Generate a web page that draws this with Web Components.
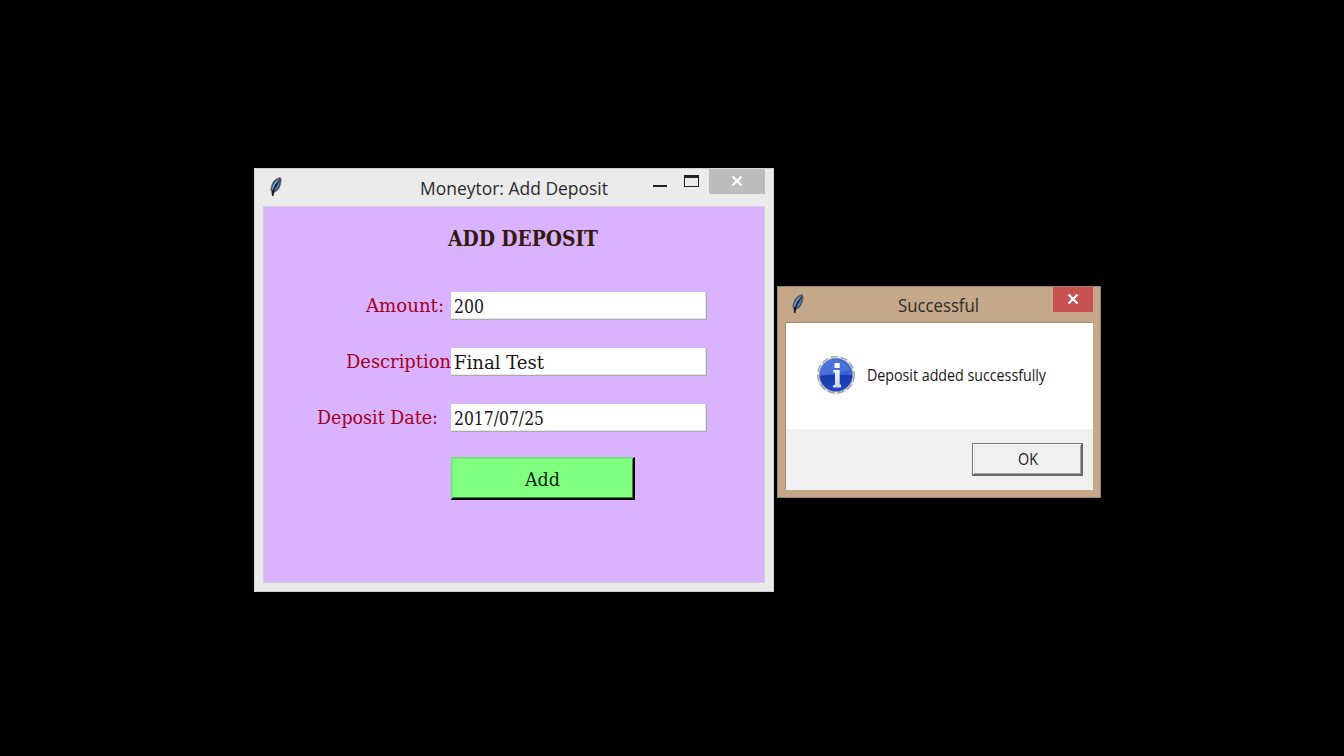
<!DOCTYPE html>
<html lang="en">
<head>
<meta charset="utf-8">
<title>Moneytor</title>
<style>
html,body{margin:0;height:100%;background:#000;overflow:hidden}
body{position:relative;font-family:"Open Sans","Noto Sans",sans-serif}
</style>
</head>
<body>
<desk-window style="left:254px;top:168px;width:520px;height:424px" caption="Moneytor: Add Deposit" caption-width="188" controls="all">
  <deposit-form></deposit-form>
</desk-window>
<desk-window class="dialog" style="left:777px;top:286px;width:324px;height:212px" caption="Successful" caption-width="81" controls="close">
  <message-box></message-box>
</desk-window>
<script>
const define = (name, html, setup) => customElements.define(name, class extends HTMLElement {
  connectedCallback() {
    if (this.shadowRoot) return;
    const t = document.createElement('template');
    t.innerHTML = html;
    this.attachShadow({mode: 'open'}).append(t.content.cloneNode(true));
    if (setup) setup.call(this, this.shadowRoot);
  }
});

/* Text condensed or widened to the width given in the "width" attribute. */
define('fit-label', `<style>
:host{display:block;flex:none;white-space:nowrap}
span{display:inline-block;transform-origin:0 50%}
</style><span><slot></slot></span>`, function (root) {
  const span = root.querySelector('span'), w = +this.getAttribute('width');
  this.style.width = w + 'px';
  span.style.transform = 'scaleX(' + w / span.getBoundingClientRect().width + ')';
});

define('feather-icon', `<style>:host{display:block;width:14px;height:20px}svg{display:block}</style>
<svg width="14" height="20" viewBox="0 0 14 20">
<path d="M11.600.8C8.500.6 5 3 3.200 7C1.700 10.500 1.500 13 2.600 14.700L3.600 19L5 15.600C7.500 14.500 9.800 12.500 10.800 9.500C11.800 6.500 12.800 3 11.600.8Z" fill="#333b45" stroke="#6f747a" stroke-width=".8"/>
<path d="M10.500 1.800C7.600 2.600 5 5.500 3.700 9C2.900 11.200 2.800 12.700 3.500 13.500C4.800 10 7.500 6 10.500 1.800Z" fill="#75a6e2"/>
<path d="M11 3.500C9 7 6.600 10.800 5 14C7.600 13 9.200 11 9.900 8.500Z" fill="#5089d2"/>
<path d="M8 5.800Q5 10 4 15M6.600 7L7.600 9.500" fill="none" stroke="#111820" stroke-width=".9"/>
<path d="M4.200 13.500L3.700 18.800" stroke="#111" stroke-width="1.500"/>
</svg>`);

define('info-icon', `<style>:host{display:block;width:40px;height:40px}svg{display:block}</style>
<svg width="40" height="40" viewBox="0 0 40 40">
<defs><linearGradient id="b" x2="0" y2="1"><stop offset="0" stop-color="#3c66d6"/><stop offset=".48" stop-color="#3763cf"/><stop offset=".52" stop-color="#173bab"/><stop offset="1" stop-color="#2348c4"/></linearGradient>
<linearGradient id="w" x2="0" y2="1"><stop offset="0" stop-color="#fff"/><stop offset="1" stop-color="#cfd3e4"/></linearGradient></defs>
<circle cx="20" cy="20.500" r="18.900" fill="#dedede"/>
<circle cx="20" cy="19.800" r="18.200" fill="#f0f0f0" stroke="#999" stroke-width="1.200" stroke-dasharray="7 3"/>
<circle cx="20" cy="20" r="16.700" fill="url(#b)" stroke="#8792ae" stroke-width=".6"/>
<path d="M3.800 22C10 18 25 18 34 15A16.400 16.400 0 0 0 5 12Z" fill="#6a90e6" opacity=".35"/>
<path d="M18.500 8H23.700V13H18.500ZM17.300 15H23.700V29.500H25V32.500H17V30.500L19 29.500V17.500H17.300Z" fill="url(#w)"/>
</svg>`);

define('desk-window', `<style>
:host{--frame:#ebebeb;--edge:#d3d3d3;--close:#bcbcbc;--side:8px;position:absolute;box-sizing:border-box;display:grid;grid-template-rows:37px 1fr;padding:0 var(--side) var(--side);border:1px solid var(--edge);background:var(--frame)}
:host(.dialog){--frame:#c4a889;--edge:#98826a;--close:#c75050;--side:7px;grid-template-rows:35px 1fr}
header{display:grid;grid-template-columns:1fr auto 1fr;align-items:start}
feather-icon{margin:8px 0 0 6px}
:host(.dialog) feather-icon{margin:7px 0 0 6px}
fit-label{font-size:18px;line-height:24px;margin-top:7px;color:#2b2b2b;font-weight:400}
:host(.dialog) fit-label{margin:6px 1px 0 -1px}
nav{display:flex;justify-content:flex-end}
.min{width:14px;height:2px;background:#222;margin:16px 17px 0 0}
.max{box-sizing:border-box;width:15px;height:12px;border:1px solid #222;border-top-width:3px;margin:6px 10px 0 0}
.close{width:56px;height:25px;background:var(--close);display:grid;place-items:center}
.close svg{margin-bottom:2px}
:host(.dialog) .close{width:40px}
:host(.dialog) .min,:host(.dialog) .max{display:none}
main{display:grid;border:1px solid #d3d0d7;min-height:0}
:host(.dialog) main{border:0;border-top:1px solid #a48b70;border-left:1px solid #a48b70}
</style>
<header><feather-icon></feather-icon><div id="t"></div>
<nav><i class="min"></i><i class="max"></i><span class="close"><svg width="12" height="10" viewBox="0 0 12 10"><path d="M1.500.5L10.500 9.500M10.500.5L1.500 9.500" stroke="#fff" stroke-width="2.200"/></svg></span></nav></header>
<main><slot></slot></main>`, function (root) {
  const f = document.createElement('fit-label');
  f.setAttribute('width', this.getAttribute('caption-width'));
  f.textContent = this.getAttribute('caption');
  root.getElementById('t').append(f);
});

define('form-row', `<style>
:host{display:grid;grid-template:28px / 187px 256px;height:28px;margin-bottom:28px}
.l{display:flex;justify-content:flex-end;color:#a3001b;line-height:26px;padding-right:var(--gap,0)}
.f{box-sizing:border-box;background:#fff;border-right:1px solid #aaa;border-bottom:1px solid #aaa;box-shadow:inset -1px -1px #e8e8e8;padding-left:3px;line-height:28px;color:#161616}
</style><div class="l"><slot name="label"></slot></div><div class="f"><slot></slot></div>`);

define('push-button', `<style>
:host{display:grid;place-items:center;box-sizing:border-box;width:184px;height:43px;padding-top:2px;background:#80ff80;border:solid;border-width:1px 2px 2px 1px;border-color:#73e073 #000 #000 #73e073;box-shadow:inset 1px 1px #78ed78,inset -1px -1px #408040;color:#10240f}
</style><slot></slot>`);

define('deposit-form', `<style>
:host{display:block;background:#d9b3ff;font-family:"DejaVu Serif Condensed","DejaVu Serif",serif;font-size:19px}
h1{margin:0 0 0 184px;padding-top:16px;height:69px;box-sizing:content-box;font-size:22px;line-height:30px;color:#341a0c}
push-button{margin:-3px 0 0 187px}
</style>
<h1><fit-label width="150">ADD DEPOSIT</fit-label></h1>
<form-row style="--gap:7px"><fit-label slot="label" width="78">Amount:</fit-label><fit-label width="30">200</fit-label></form-row>
<form-row><fit-label slot="label" width="105">Description</fit-label><fit-label width="90">Final Test</fit-label></form-row>
<form-row style="--gap:13px"><fit-label slot="label" width="121">Deposit Date:</fit-label><fit-label width="90">2017/07/25</fit-label></form-row>
<push-button><fit-label width="35">Add</fit-label></push-button>`);

define('message-box', `<style>
:host{display:grid;grid-template-rows:106px 1fr;background:#f0f0f0;color:#1c1720;font-size:16px}
.m{display:flex;align-items:center;background:#fff;padding-left:30px;gap:11px}
.m info-icon{margin-top:-3px}
.m fit-label{line-height:22px;margin-top:-3px}
.a{display:flex;justify-content:flex-end;align-items:flex-start;padding:14px 10px 0 0}
button{all:unset;box-sizing:border-box;width:111px;height:33px;padding-left:1px;display:grid;place-items:center;border:solid;border-width:1px 2px 2px 1px;border-color:#777 #686868 #686868 #777;box-shadow:inset 1px 1px #fff,inset -1px -1px #a5a5a5,inset 2px 2px #e5e5e5}
button fit-label{line-height:22px;margin-top:-1px}
</style>
<div class="m"><info-icon></info-icon><fit-label width="179">Deposit added successfully</fit-label></div>
<div class="a"><button><fit-label width="20">OK</fit-label></button></div>`);
</script>
</body>
</html>
